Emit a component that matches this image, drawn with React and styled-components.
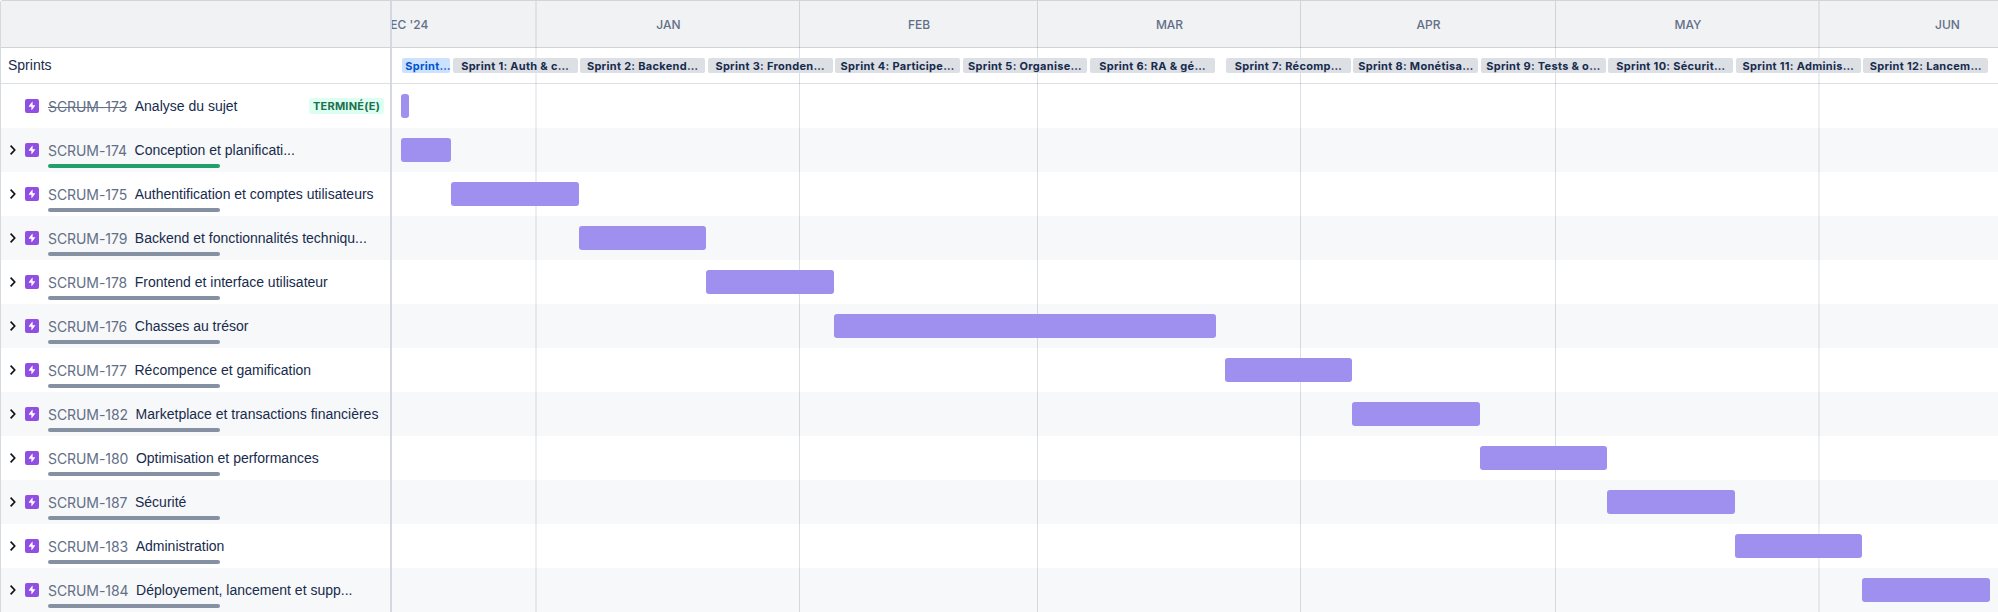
import React from 'react';
import styled, { createGlobalStyle } from 'styled-components';

const GlobalStyle = createGlobalStyle`
  *, *::before, *::after { box-sizing: border-box; }
  body { margin: 0; background: #fff; overflow: hidden; }
`;

const DAY = 8.498;
const HAIRLINE = 'rgba(9, 30, 66, 0.14)';

const MONTHS = [
  { label: "DEC '24", width: 264, soft: true },
  { label: 'JAN', width: 263 },
  { label: 'FEB', width: 238 },
  { label: 'MAR', width: 263 },
  { label: 'APR', width: 255 },
  { label: 'MAY', width: 264, soft: true },
  { label: 'JUN', width: 255 },
];

const SPRINTS = [
  { name: 'Sprint…', days: 6, active: true },
  { name: 'Sprint 1: Auth & c…' },
  { name: 'Sprint 2: Backend…' },
  { name: 'Sprint 3: Fronden…' },
  { name: 'Sprint 4: Participe…' },
  { name: 'Sprint 5: Organise…' },
  { name: 'Sprint 6: RA & gé…' },
  { name: 'Sprint 7: Récomp…', offset: 1 },
  { name: 'Sprint 8: Monétisa…' },
  { name: 'Sprint 9: Tests & o…' },
  { name: 'Sprint 10: Sécurit…' },
  { name: 'Sprint 11: Adminis…' },
  { name: 'Sprint 12: Lancem…' },
];

const EPICS = [
  { key: 'SCRUM-173', title: 'Analyse du sujet', start: 0, days: 1, done: true },
  { key: 'SCRUM-174', title: 'Conception et planificati...', start: 0, days: 6, progress: 'done' },
  { key: 'SCRUM-175', title: 'Authentification et comptes utilisateurs', start: 6, days: 15 },
  { key: 'SCRUM-179', title: 'Backend et fonctionnalités techniqu...', start: 21, days: 15 },
  { key: 'SCRUM-178', title: 'Frontend et interface utilisateur', start: 36, days: 15 },
  { key: 'SCRUM-176', title: 'Chasses au trésor', start: 51, days: 45 },
  { key: 'SCRUM-177', title: 'Récompence et gamification', start: 97, days: 15 },
  { key: 'SCRUM-182', title: 'Marketplace et transactions financières', start: 112, days: 15 },
  { key: 'SCRUM-180', title: 'Optimisation et performances', start: 127, days: 15 },
  { key: 'SCRUM-187', title: 'Sécurité', start: 142, days: 15 },
  { key: 'SCRUM-183', title: 'Administration', start: 157, days: 15 },
  { key: 'SCRUM-184', title: 'Déployement, lancement et supp...', start: 172, days: 15 },
];

const Roadmap = styled.div`
  display: flex;
  width: 1998px;
  height: 612px;
  overflow: hidden;
  border-top: 1px solid #d0d4db;
  border-left: 1px solid #d5d9e0;
  border-top-left-radius: 3px;
  font-family: 'Liberation Sans', Arial, sans-serif;
  color: #172b4d;
`;

const Sidebar = styled.div`
  flex: none;
  width: 391px;
  border-right: 2px solid #d5d8e0;
`;

const Timeline = styled.div`
  position: relative;
  flex: 1;
  min-width: 0;
  overflow: hidden;
`;

const HeaderBand = styled.div`
  display: flex;
  height: 47px;
  background: #f1f2f4;
  border-bottom: 1px solid #cfd3da;
`;

const MonthTrack = styled.div`
  display: flex;
  flex: none;
  margin-left: -119px;
`;

const MonthCell = styled.div`
  flex: none;
  width: ${(p) => p.$width}px;
  padding-top: 15px;
  text-align: center;
  font: 500 12px/17px Inter, sans-serif;
  color: #626f86;
`;

const GridLines = styled.div`
  position: absolute;
  inset: 0;
  display: flex;
  pointer-events: none;
`;

const GridColumn = styled.div`
  flex: none;
  width: ${(p) => p.$width}px;
  border-right: ${(p) => (p.$soft ? '2px solid rgba(9, 30, 66, 0.07)' : `1px solid ${HAIRLINE}`)};
`;

const SprintLabel = styled.div`
  height: 36px;
  padding: 8px 0 0 7px;
  border-bottom: 1px solid #dcdfe4;
  font-size: 14px;
  line-height: 18px;
`;

const SprintTrack = styled.div`
  display: flex;
  height: 36px;
  padding: 10px 0 0 8.4px;
  border-bottom: 1px solid #dcdfe4;
`;

const SprintPill = styled.div`
  position: relative;
  z-index: 1;
  flex: none;
  width: ${(p) => p.$days * DAY - 2.5}px;
  height: 15px;
  margin: 0 1.25px 0 ${(p) => 1.25 + p.$offset * DAY}px;
  padding-left: ${(p) => (p.$active ? 3.5 : 0)}px;
  border-radius: 2px;
  background: ${(p) => (p.$active ? '#cce0ff' : '#dcdfe4')};
  color: ${(p) => (p.$active ? '#0055cc' : '#172b4d')};
  display: flex;
  justify-content: ${(p) => (p.$active ? 'flex-start' : 'center')};
  white-space: nowrap;
  font: 700 11px/16px Inter, sans-serif;
  letter-spacing: 0.3px;
`;

const EpicRow = styled.div`
  display: flex;
  height: 44px;
  padding-left: 9px;
  background: ${(p) => (p.$striped ? '#f7f8f9' : '#fff')};
`;

const ChevronSlot = styled.div`
  flex: none;
  width: 15px;
  padding-top: 17px;
  svg { display: block; }
`;

const EpicIcon = styled.div`
  flex: none;
  width: 14px;
  height: 14px;
  margin-top: 15px;
  border-radius: 2px;
  background: #904ee2;
  svg { display: block; }
`;

const EpicBody = styled.div`
  flex: 1;
  min-width: 0;
  padding: 13px 0 0 9px;
`;

const EpicLine = styled.div`
  display: flex;
  height: 19px;
  white-space: nowrap;
`;

const EpicKey = styled.span`
  font: 400 14px/20px Inter, sans-serif;
  letter-spacing: -0.07px;
  color: #626f86;
  text-decoration: ${(p) => (p.$done ? 'line-through' : 'none')};
`;

const EpicTitle = styled.span`
  margin-left: 7.6px;
  font-size: 14px;
  line-height: 18px;
`;

const Lozenge = styled.span`
  height: 16px;
  margin: 1px 6px 0 auto;
  padding: 0 4px;
  border-radius: 3px;
  background: #dcfff1;
  color: #216e4e;
  font: 700 11px/16px Inter, sans-serif;
  letter-spacing: 0.22px;
`;

const Progress = styled.div`
  width: 171.5px;
  height: 4px;
  margin-top: 4px;
  border-radius: 2px;
  background: ${(p) => (p.$done ? '#22a06b' : '#8590a2')};
`;

const BarRow = styled.div`
  height: 44px;
  padding: 10px 0 0 8.5px;
  background: ${(p) => (p.$striped ? '#f7f8f9' : '#fff')};
`;

const Bar = styled.div`
  position: relative;
  z-index: 1;
  width: ${(p) => p.$days * DAY}px;
  height: 24px;
  margin-left: ${(p) => p.$start * DAY}px;
  border-radius: 3px;
  background: #9f8fef;
`;

const Chevron = () => (
  <svg width="8" height="10" viewBox="0 0 8 10" fill="none" stroke="#10141c" strokeWidth="1.7">
    <path d="M0.6 0.7 4.7 5 0.6 9.3" />
  </svg>
);

const Bolt = () => (
  <svg width="14" height="14" viewBox="0 0 14 14" fill="#fff">
    <path d="M7.6 3v3.2h2.3c.3 0 .4.3.2.6L6.9 11c-.2.2-.5.1-.5-.2V7.7H4.2c-.4 0-.5-.3-.3-.6L7 2.9c.2-.3.6-.2.6.1z" />
  </svg>
);

export default function App() {
  return (
    <>
      <GlobalStyle />
      <Roadmap>
        <Sidebar>
          <HeaderBand />
          <SprintLabel>Sprints</SprintLabel>
          {EPICS.map((epic, i) => (
            <EpicRow key={epic.key} $striped={i % 2 === 1}>
              <ChevronSlot>{!epic.done && <Chevron />}</ChevronSlot>
              <EpicIcon><Bolt /></EpicIcon>
              <EpicBody>
                <EpicLine>
                  <EpicKey $done={epic.done}>{epic.key}</EpicKey>
                  <EpicTitle>{epic.title}</EpicTitle>
                  {epic.done && <Lozenge>TERMINÉ(E)</Lozenge>}
                </EpicLine>
                {!epic.done && <Progress $done={epic.progress === 'done'} />}
              </EpicBody>
            </EpicRow>
          ))}
        </Sidebar>
        <Timeline>
          <HeaderBand>
            <MonthTrack>
              {MONTHS.map((m) => (
                <MonthCell key={m.label} $width={m.width}>{m.label}</MonthCell>
              ))}
            </MonthTrack>
          </HeaderBand>
          <SprintTrack>
            {SPRINTS.map((s) => (
              <SprintPill key={s.name} $days={s.days || 15} $offset={s.offset || 0} $active={s.active}>
                {s.name}
              </SprintPill>
            ))}
          </SprintTrack>
          {EPICS.map((epic, i) => (
            <BarRow key={epic.key} $striped={i % 2 === 1}>
              <Bar $start={epic.start} $days={epic.days} />
            </BarRow>
          ))}
          <GridLines>
            <MonthTrack>
              {MONTHS.map((m) => (
                <GridColumn key={m.label} $width={m.width} $soft={m.soft} />
              ))}
            </MonthTrack>
          </GridLines>
        </Timeline>
      </Roadmap>
    </>
  );
}
